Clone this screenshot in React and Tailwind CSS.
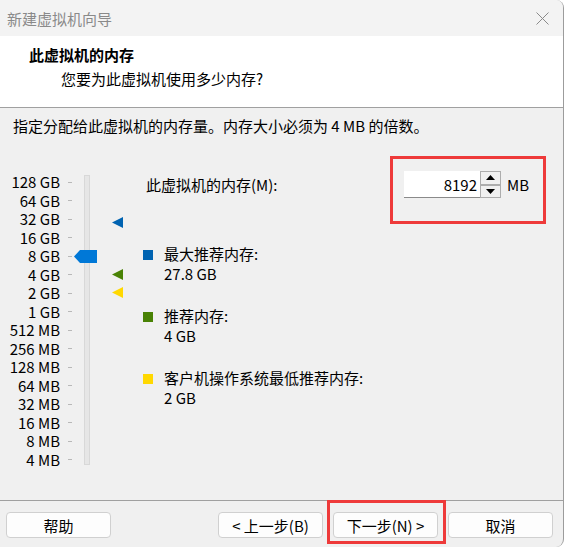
import React from 'react';

const labels = [
  '128 GB', '64 GB', '32 GB', '16 GB', '8 GB', '4 GB', '2 GB', '1 GB',
  '512 MB', '256 MB', '128 MB', '64 MB', '32 MB', '16 MB', '8 MB', '4 MB',
];

const legend = [
  { color: 'bg-[#0063b1]', title: '最大推荐内存:', value: '27.8 GB' },
  { color: 'bg-[#498205]', title: '推荐内存:', value: '4 GB' },
  { color: 'bg-[#ffd800]', title: '客户机操作系统最低推荐内存:', value: '2 GB' },
];

const Marker = ({ color, top }) => (
  <svg className="absolute left-[112px]" style={{ top }} width="11" height="11" viewBox="0 0 11 11">
    <polygon points="0,5.5 11,0 11,11" fill={color} />
  </svg>
);

const SpinArrow = ({ up }) => (
  <div className="flex-1 flex items-center justify-center border border-[#adadad] bg-[#f0f0f0]">
    <svg width="9" height="5" viewBox="0 0 9 5">
      <polygon points={up ? '4.5,0 9,5 0,5' : '0,0 9,0 4.5,5'} fill="#000" />
    </svg>
  </div>
);

const Button = ({ children }) => (
  <button className="w-[105px] h-[26px] bg-[#fdfdfd] border border-[#d0d0d0] rounded-[4px] text-[15px] leading-none text-black">
    {children}
  </button>
);

export default function App() {
  return (
    <div className="relative w-[566px] h-[547px] bg-white overflow-hidden font-['Noto_Sans_CJK_SC',sans-serif] text-[15px] text-black">
      <div className="w-[564px] h-[547px] flex flex-col bg-[#f0f0f0] border-r border-[#9c9c9c] rounded-tr-[8px] rounded-br-[8px] overflow-hidden">
        {/* Title bar */}
        <div className="h-[36px] flex items-center justify-between pl-[7px] pr-[14px] bg-[#f3f3f3]">
          <span className="text-[#8a8a8a] leading-none">新建虚拟机向导</span>
          <svg width="13" height="13" viewBox="0 0 13 13">
            <path d="M0.5 0.5 L12.5 12.5 M12.5 0.5 L0.5 12.5" stroke="#8a8a8a" strokeWidth="1" />
          </svg>
        </div>

        {/* Header */}
        <div className="h-[72px] bg-white border-b border-[#a0a0a0] pt-[9px] pl-[29px]">
          <div className="font-bold leading-[20px]">此虚拟机的内存</div>
          <div className="leading-[20px] mt-[4px] pl-[32px]">您要为此虚拟机使用多少内存?</div>
        </div>

        {/* Body */}
        <div className="flex-1 flex flex-col">
          <div className="pt-[8px] pl-[13px] leading-[20px]">指定分配给此虚拟机的内存量。内存大小必须为 4 MB 的倍数。</div>

          <div className="flex mt-[35px]">
            {/* Slider */}
            <div className="relative w-[143px] h-[296px] mt-[2px] flex">
              <div className="w-[60px] flex flex-col">
                {labels.map((l) => (
                  <div key={l} className="h-[18.5px] leading-[18.5px] text-right whitespace-nowrap">
                    {l}
                  </div>
                ))}
              </div>
              <div className="w-[4px] ml-[8px] flex flex-col">
                {labels.map((l) => (
                  <div key={l} className="h-[18.5px] flex items-center">
                    <div className="w-[4px] h-[1px] bg-[#b8b8b8]" />
                  </div>
                ))}
              </div>
              <div className="w-[6px] h-[290px] mt-[2px] ml-[12px] bg-[#e6e6e6] border border-[#d8d8d8]" />

              <svg className="absolute left-[74px] top-[77px]" width="23" height="13" viewBox="0 0 23 13">
                <polygon points="0,6.5 6,0 23,0 23,13 6,13" fill="#0078d7" />
              </svg>
              <Marker color="#0063b1" top={44} />
              <Marker color="#498205" top={96} />
              <Marker color="#ffd800" top={114} />
            </div>

            {/* Content */}
            <div className="flex flex-col">
              <div className="h-[27px] flex items-center">
                <span className="w-[261px] pl-[3px] leading-none">此虚拟机的内存(M):</span>
                <div className="w-[76px] h-[27px] bg-white border-b border-[#8a8a8a] flex items-center justify-end pr-[3px] leading-none">
                  8192
                </div>
                <div className="w-[21px] h-[27px] flex flex-col">
                  <SpinArrow up />
                  <SpinArrow />
                </div>
                <span className="ml-[6px] leading-none">MB</span>
              </div>

              <div className="mt-[46px] flex flex-col gap-[22px]">
                {legend.map((g) => (
                  <div key={g.title} className="flex">
                    <div className={`w-[10px] h-[10px] mt-[6px] ${g.color}`} />
                    <div className="ml-[11px] flex flex-col">
                      <div className="leading-[20px]">{g.title}</div>
                      <div className="leading-[20px]">{g.value}</div>
                    </div>
                  </div>
                ))}
              </div>
            </div>
          </div>
        </div>

        {/* Footer */}
        <div className="h-[47px] border-t border-[#a0a0a0] flex items-start pt-[11px] pl-[6px] pr-[10px]">
          <Button>帮助</Button>
          <div className="ml-auto flex gap-[10px] pl-[1px]">
            <Button>&lt; 上一步(B)</Button>
            <Button>下一步(N) &gt;</Button>
            <Button>取消</Button>
          </div>
        </div>
      </div>

      {/* Annotation boxes */}
      <div className="absolute left-[390px] top-[156px] w-[156px] h-[68px] border-[3px] border-[#ee3a3a]" />
      <div className="absolute left-[327px] top-[500px] w-[119px] h-[44px] border-[3px] border-[#ee3a3a]" />
    </div>
  );
}
